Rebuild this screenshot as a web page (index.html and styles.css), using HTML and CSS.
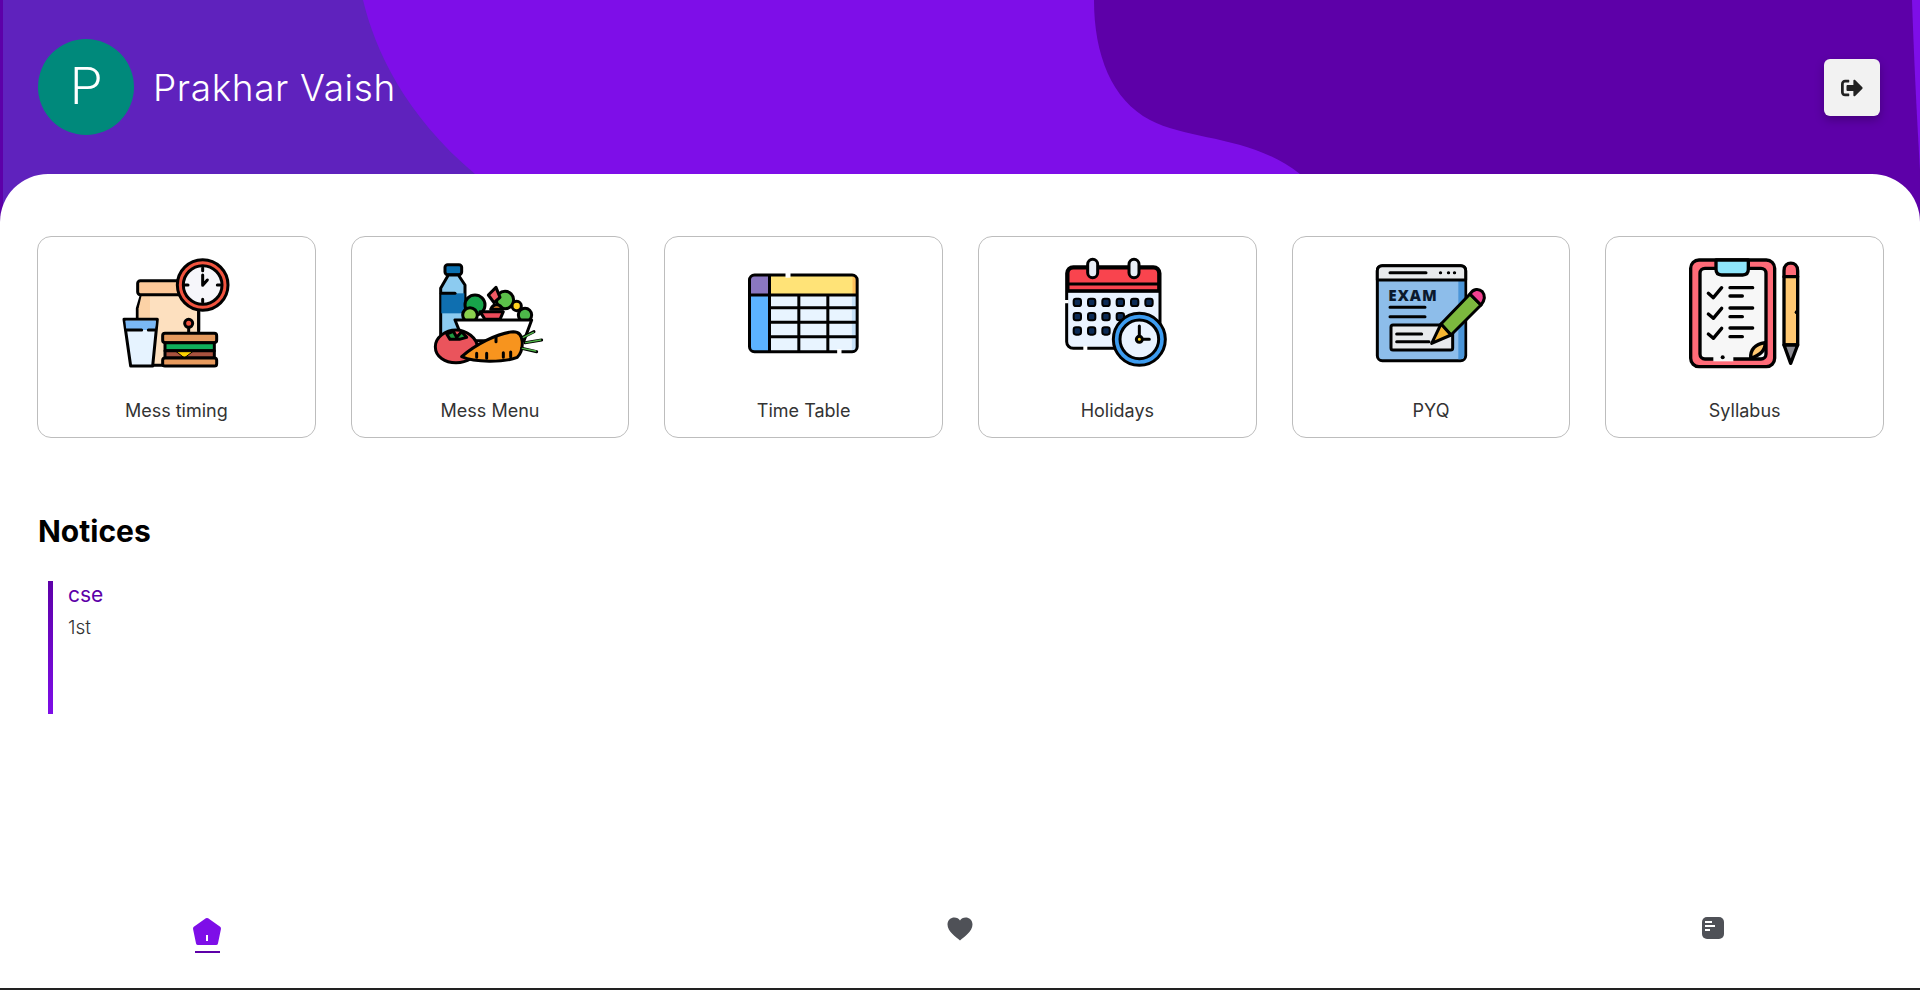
FILE: index.html
```html
<!DOCTYPE html>
<html lang="en">
<head>
<meta charset="utf-8">
<title>Dashboard</title>
<link rel="stylesheet" href="styles.css">
</head>
<body>
<div class="app">
  <svg class="hero-bg" viewBox="0 0 1920 222" width="1920" height="222" aria-hidden="true">
    <rect class="c-mid" x="0" y="0" width="1920" height="222"/>
    <rect class="c-dark" x="0" y="0" width="3" height="222"/>
    <path class="c-left" d="M3 0H363C375 50 405 115 475 174V222H3Z"/>
    <path class="c-dark" d="M1094 0C1094 55 1112 100 1150 120C1190 141 1250 135 1300 174V222H1920V0Z"/>
    <path class="c-mid" d="M1912 0C1914 60 1917 120 1920 170V0Z"/>
  </svg>
  <header class="hero">
    <div class="user">
      <div class="avatar">P</div>
      <h1 class="user-name">Prakhar Vaish</h1>
    </div>
    <button class="logout" type="button" aria-label="Log out">
      <svg viewBox="0 0 512 512" width="22" height="22"><path fill="#222" d="M497 273L329 441c-15 15-41 4.5-41-17v-96H152c-13.3 0-24-10.7-24-24v-96c0-13.3 10.7-24 24-24h136V88c0-21.4 25.9-32 41-17l168 168c9.3 9.4 9.3 24.6 0 34zM192 436v-40c0-6.6-5.4-12-12-12H96c-17.7 0-32-14.3-32-32V160c0-17.7 14.3-32 32-32h84c6.6 0 12-5.4 12-12V76c0-6.6-5.4-12-12-12H96c-53 0-96 43-96 96v192c0 53 43 96 96 96h84c6.6 0 12-5.4 12-12z"/></svg>
    </button>
  </header>

  <main class="sheet">
    <section class="tiles">
      <a class="tile">
        <svg class="tile-icon" viewBox="-12 0 480 420">
          <g stroke="#000" stroke-width="9" stroke-linejoin="round" stroke-linecap="round">
            <path fill="#fde0bf" d="M125 162L112 205V376H296V162Z"/>
            <path fill="#fcd2a6" stroke="none" d="M125 166L116 205V372H150V166Z"/>
            <rect x="113" y="122" width="135" height="42" rx="8" fill="#fdc898"/>
            <circle cx="308" cy="135" r="76" fill="#f1543f"/>
            <circle cx="308" cy="135" r="58" fill="#f6f6fa"/>
            <path fill="none" d="M308 105V136L322 120M308 84V92M308 178V186M256 135H264M352 135H360"/>
            <path fill="none" d="M266 262V282M296 215V270"/>
            <circle cx="266" cy="250" r="12" fill="#f1543f"/>
            <path fill="#e6f3ff" d="M72 238H172L158 378H92Z"/>
            <path fill="#7ab8f5" stroke="none" d="M76 242H168L165 270H79Z"/>
            <path fill="none" d="M78 270H125M145 270H165"/>
            <rect x="188" y="280" width="162" height="28" rx="7" fill="#e49a5e"/>
            <rect x="195" y="308" width="148" height="24" fill="#0fae5a"/>
            <rect x="195" y="332" width="148" height="22" fill="#a8523e"/>
            <path fill="#fbd000" stroke-width="3" d="M230 335H278L254 353Z"/>
            <rect x="188" y="354" width="162" height="24" rx="7" fill="#e89b5e"/>
          </g>
        </svg>
        <span class="tile-label">Mess timing</span>
      </a>
      <a class="tile">
        <svg class="tile-icon" viewBox="-30 -30 480 420">
          <g stroke="#000" stroke-width="9" stroke-linejoin="round" stroke-linecap="round">
            <rect x="75" y="44" width="50" height="30" rx="8" fill="#0a70b0"/>
            <path fill="#8ccbf0" d="M85 75H115L135 105V255H62V115Z"/>
            <rect x="64" y="130" width="69" height="60" fill="#0f6fb0" stroke="none"/>
            <path fill="none" d="M64 130H105"/>
            <circle cx="165" cy="165" r="30" fill="#17a34a"/>
            <circle cx="255" cy="150" r="26" fill="#5cc04a"/>
            <circle cx="150" cy="195" r="22" fill="#8ad04e"/>
            <circle cx="315" cy="195" r="20" fill="#4db84a"/>
            <circle cx="290" cy="168" r="14" fill="#ffd21f"/>
            <path fill="#f25a64" d="M205 135L228 112L240 142L222 158Z"/>
            <path fill="#f08d2e" d="M212 178C220 160 240 160 248 178Z"/>
            <path fill="#ee4b5a" d="M180 185H250L240 208H195Z"/>
            <path fill="#fff" d="M105 210H335L312 272H130Z"/>
            <path fill="#ea545c" d="M108 240C140 240 172 265 172 292C172 322 140 338 108 338C75 338 46 320 46 290C46 262 76 240 108 240Z"/>
            <path fill="#1f9b3f" d="M80 252L100 244L110 262L125 245L140 262L118 268H90Z"/>
            <path fill="#f7941e" d="M125 320C165 285 230 250 280 245C315 245 312 300 292 322C250 338 165 338 125 320Z"/>
            <path fill="none" d="M170 310V322M200 310V325M228 262V275M250 308V322M272 306V320"/>
            <path fill="none" stroke="#000" d="M308 262L342 245M315 278L365 270M305 295L350 305"/>
            <path fill="none" stroke="#4fb648" stroke-width="4" d="M310 262L340 247M317 278L362 270M307 295L347 303"/>
          </g>
        </svg>
        <span class="tile-label">Mess Menu</span>
      </a>
      <a class="tile">
        <svg class="tile-icon" viewBox="-19.5 -45 480 420">
          <rect x="57" y="60" width="323" height="230" rx="15" fill="#e8f4ff"/>
          <path fill="#8a77c0" d="M60 120V75Q60 62 72 62H117V120Z"/>
          <path fill="#ffe377" d="M117 62H365Q378 62 378 75V120H117Z"/>
          <path fill="#ffc05c" d="M366 62Q378 62 378 75V120H366Z"/>
          <path fill="#5cb3ff" d="M60 120H117V288H72Q60 288 60 276Z"/>
          <path fill="#c6e0f7" d="M364 120H378V276Q378 288 366 288H364Z"/>
          <g fill="none" stroke="#000" stroke-width="9">
            <rect x="57" y="60" width="323" height="230" rx="15"/>
            <path d="M57 120H380M117 60V290M205 120V290M292 120V290M117 158H380M117 202H380M117 245H380"/>
          </g>
          <path d="M165 52H180V68H165ZM320 282H333V298H320Z" fill="#fff"/>
        </svg>
        <span class="tile-label">Time Table</span>
      </a>
      <a class="tile">
        <svg class="tile-icon" viewBox="-39 -30 480 420">
          <g stroke="#000" stroke-width="9" stroke-linejoin="round" stroke-linecap="round">
            <rect x="50" y="50" width="280" height="245" rx="20" fill="#eaf3ff"/>
            <path fill="#f9444e" d="M54 122V70Q54 54 70 54H310Q326 54 326 70V122Z"/>
            <path fill="none" d="M52 102H328M52 124H328"/>
            <rect x="113" y="28" width="30" height="55" rx="15" fill="#e8eef5"/>
            <rect x="237" y="28" width="30" height="55" rx="15" fill="#e8eef5"/>
            <g fill="#0b2a55" stroke-width="6">
              <rect x="71" y="146" width="22" height="22" rx="7"/>
              <rect x="114" y="146" width="22" height="22" rx="7"/>
              <rect x="157" y="146" width="22" height="22" rx="7"/>
              <rect x="200" y="146" width="22" height="22" rx="7"/>
              <rect x="243" y="146" width="22" height="22" rx="7"/>
              <rect x="286" y="146" width="22" height="22" rx="7"/>
              <rect x="71" y="189" width="22" height="22" rx="7"/>
              <rect x="114" y="189" width="22" height="22" rx="7"/>
              <rect x="157" y="189" width="22" height="22" rx="7"/>
              <rect x="200" y="189" width="22" height="22" rx="7"/>
              <rect x="71" y="232" width="22" height="22" rx="7"/>
              <rect x="114" y="232" width="22" height="22" rx="7"/>
              <rect x="157" y="232" width="22" height="22" rx="7"/>
            </g>
            <circle cx="268" cy="268" r="78" fill="#3d9cf0"/>
            <circle cx="268" cy="268" r="58" fill="#eaf3ff"/>
            <path fill="none" d="M268 228V262M276 268H298"/>
            <circle cx="268" cy="268" r="9" fill="#ffd21f"/>
          </g>
          <path d="M44 150H56V160H44ZM100 288H112V300H100Z" fill="#fff"/>
        </svg>
        <span class="tile-label">Holidays</span>
      </a>
      <a class="tile">
        <svg class="tile-icon" viewBox="-42 -30 480 420">
          <g stroke="#000" stroke-width="9" stroke-linejoin="round" stroke-linecap="round">
            <rect x="37" y="47" width="265" height="285" rx="15" fill="#8dbdea"/>
            <path fill="#4a95d8" stroke="none" d="M280 90H298V315Q298 328 285 328H280Z"/>
            <path fill="#e8eaec" d="M37 90V62Q37 47 52 47H287Q302 47 302 62V90Z"/>
            <path fill="none" d="M75 68H183M226 68H227M250 68H251M268 68H269M75 172H180M75 200H180"/>
            <rect x="78" y="225" width="185" height="75" rx="6" fill="#e8eaec"/>
            <path fill="none" d="M95 252H170M95 275H192"/>
            <path fill="#7cb83e" d="M228 222L315 132L348 165L258 255Z"/>
            <path fill="#f0418e" d="M315 132C325 115 342 115 352 125C360 135 360 150 348 165Z"/>
            <path fill="#f7b733" d="M228 222L258 255L200 280Z"/>
          </g>
          <text class="exam" x="70" y="152">EXAM</text>
        </svg>
        <span class="tile-label">PYQ</span>
      </a>
      <a class="tile">
        <svg class="tile-icon" viewBox="-45 -30 480 420">
          <g stroke="#000" stroke-width="10" stroke-linejoin="round" stroke-linecap="round">
            <rect x="32" y="30" width="252" height="320" rx="25" fill="#ff6b78"/>
            <rect x="60" y="55" width="198" height="272" rx="15" fill="#f7f7f7"/>
            <path fill="#8fe6fb" d="M108 30H205V58Q205 75 188 75H125Q108 75 108 58Z"/>
            <path fill="none" d="M85 130L100 143L125 113M150 113H218M150 138H187M85 192L100 205L125 175M150 174H218M150 200H187M85 252L100 265L125 235M150 234H218M150 260H187"/>
            <path fill="#ffc872" d="M212 325Q210 285 255 278Q258 310 212 325Z"/>
            <path fill="#ff6b78" d="M312 80V62C312 32 353 32 353 62V80Z"/>
            <path fill="#ffc872" d="M312 80H353V285H312Z"/>
            <path fill="#8c8c94" d="M312 285H353L332 340Z"/>
          </g>
          <circle cx="350" cy="187" r="6" fill="#000"/>
          <path d="M100 318H160V334H100Z" fill="#f7f7f7"/>
          <circle cx="128" cy="322" r="6" fill="#000"/>
        </svg>
        <span class="tile-label">Syllabus</span>
      </a>
    </section>

    <section class="notices">
      <h2 class="notices-title">Notices</h2>
      <article class="notice">
        <h3 class="notice-title">cse</h3>
        <p class="notice-body">1st</p>
      </article>
    </section>
  </main>

  <nav class="tabbar">
    <a class="tab tab-active">
      <svg viewBox="0 0 30 30" width="30" height="30"><path fill="#7e0ee8" stroke="#7e0ee8" stroke-width="4" stroke-linejoin="round" d="M15 3L27 11.500L24 26H6L3 11.500Z"/><rect x="14" y="18" width="2" height="6" fill="#fff"/></svg>
    </a>
    <a class="tab">
      <svg viewBox="0 0 26 24" width="26" height="24"><path fill="#4f5157" d="M13 23.500C9 20 .5 14.500 .5 7.500C.5 3 4 .5 7.300 .5C9.800 .5 12 1.800 13 3.500C14 1.800 16.200 .5 18.700 .5C22 .5 25.500 3 25.500 7.500C25.500 14.500 17 20 13 23.500Z"/></svg>
    </a>
    <a class="tab">
      <svg viewBox="0 0 22 22" width="22" height="22"><rect width="22" height="22" rx="5" fill="#4f5157"/><path fill="#fff" d="M3 4H10V6H3ZM3 8H13V10H3ZM3 12H8V14H3Z"/></svg>
    </a>
  </nav>
</div>
</body>
</html>
```

FILE: styles.css
```css
* { box-sizing: border-box; }
html, body { margin: 0; height: 100%; overflow: hidden; }
body { font-family: Inter, "Open Sans", sans-serif; color: #333; background: #fff; }

.app { position: relative; height: 990px; display: flex; flex-direction: column; border-bottom: 2px solid #222; }

.hero-bg { position: absolute; top: 0; left: 0; display: block; }
.c-mid { fill: #7e0ee8; }
.c-dark { fill: #5d00a8; }
.c-left { fill: #5f22bd; }

.hero { position: relative; height: 174px; flex: none; display: flex; align-items: center; justify-content: space-between; padding: 0 40px 0 38px; }
.user { display: flex; align-items: center; gap: 19px; }
.avatar { width: 96px; height: 96px; border-radius: 50%; background: #00897b; color: #fff; font: 300 52px/96px Roboto, sans-serif; text-align: center; }
.user-name { margin: 0; font-size: 37px; font-weight: 300; color: #fff; letter-spacing: .6px; }
.logout { width: 56px; height: 57px; margin-top: 1px; border: 0; border-radius: 6px; background: #f2f2f2; display: flex; align-items: center; justify-content: center; padding: 0; box-shadow: 0 4px 10px rgba(0,0,0,.25); }
.logout svg { display: block; }

.sheet { position: relative; flex: 1; background: #fff; border-radius: 48px 48px 0 0; padding: 62px 36px 0 37px; }

.tiles { display: grid; grid-template-columns: repeat(6, 1fr); gap: 35px; }
.tile { height: 202px; border: 1px solid #bdbdbd; border-radius: 14px; display: flex; flex-direction: column; align-items: center; padding-top: 3px; }
.tile-icon { width: 160px; height: 140px; flex: none; display: block; }
.tile-label { margin-top: 20px; font-size: 18px; line-height: 22px; color: #333; }
.exam { font: 800 46px "Open Sans", sans-serif; letter-spacing: 3px; fill: #0b1a2e; }

.notices { padding: 75px 0 0 1px; }
.notices-title { margin: 0; font-size: 30px; line-height: 36px; font-weight: 700; color: #000; }
.notice { margin: 32px 0 0 10px; height: 133px; padding: 0 0 0 15px; position: relative; border-left: 5px solid; border-image: linear-gradient(#5d00a8, #7e0ee8) 1; }
.notice-title { margin: 0; font-size: 21px; line-height: 28px; font-weight: 400; color: #5d00a8; }
.notice-body { margin: 6px 0 0; font-size: 19px; line-height: 26px; font-weight: 300; color: #333; }

.tabbar { flex: none; height: 74px; display: flex; justify-content: space-between; padding: 0 192px 0 192px; }
.tab { width: 30px; height: 40px; padding-top: 3px; display: flex; justify-content: center; align-items: flex-start; }
.tab svg { display: block; }
.tab-active { position: relative; }
.tab-active::after { content: ""; position: absolute; left: 3px; right: 2px; bottom: 1px; height: 2px; background: #5d00a8; }
```
